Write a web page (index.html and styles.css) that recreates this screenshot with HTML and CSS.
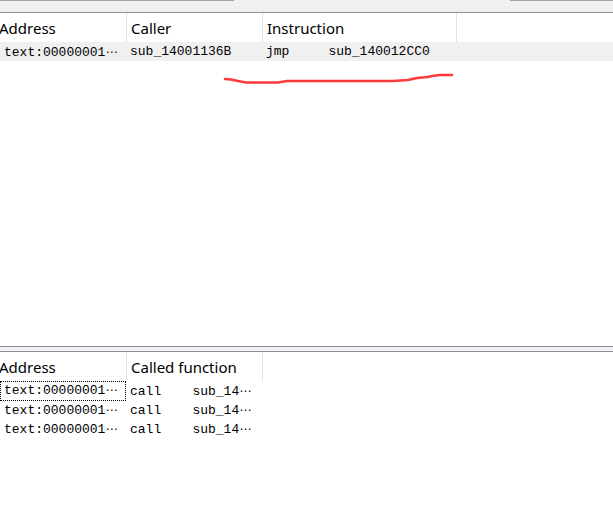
FILE: index.html
```html
<!DOCTYPE html>
<html>
<head>
<meta charset="utf-8">
<link rel="stylesheet" href="styles.css">
</head>
<body>
<div class="topbar"><span class="thumb thumb-a"></span><span class="thumb thumb-b"></span></div>
<section class="pane pane-top">
  <div class="grid cols3 head">
    <div class="hcell first">Address</div>
    <div class="hcell">Caller</div>
    <div class="hcell">Instruction</div>
  </div>
  <div class="grid cols3 row selected">
    <div class="cell first">text:00000001<span class="ell">⋯</span></div>
    <div class="cell">sub_14001136B</div>
    <div class="cell">jmp     sub_140012CC0</div>
  </div>
  <svg class="mark" width="240" height="16" viewBox="0 0 240 16">
    <path d="M4 7 L10 7.5 L17 9 L25 10.5 L57 10.5 L66 9 L172 9 L187 8 L196 6 L207 5 L211 4 L219 3 L231 3" fill="none" stroke="#ff3a3a" stroke-width="2.6" stroke-linecap="round" stroke-linejoin="round"/>
  </svg>
</section>
<div class="splitter"></div>
<section class="pane pane-bottom">
  <div class="grid cols2 head">
    <div class="hcell first">Address</div>
    <div class="hcell">Called function</div>
  </div>
  <div class="grid cols2 row">
    <div class="cell first focus">text:00000001<span class="ell">⋯</span></div>
    <div class="cell">call    sub_14<span class="ell">⋯</span></div>
  </div>
  <div class="grid cols2 row">
    <div class="cell first">text:00000001<span class="ell">⋯</span></div>
    <div class="cell">call    sub_14<span class="ell">⋯</span></div>
  </div>
  <div class="grid cols2 row">
    <div class="cell first">text:00000001<span class="ell">⋯</span></div>
    <div class="cell">call    sub_14<span class="ell">⋯</span></div>
  </div>
</section>
</body>
</html>
```
FILE: styles.css
```css
html, body {
  margin: 0;
  padding: 0;
  background: #ffffff;
  width: 613px;
  height: 518px;
  overflow: hidden;
}

.topbar {
  height: 12px;
  background: #f0f0f0;
  border-bottom: 1px solid #8b8e96;
  display: flex;
  align-items: flex-start;
}

.thumb {
  display: block;
  height: 1px;
  background: #a3a3a3;
}

.thumb-a { width: 234px; }
.thumb-b { width: 103px; margin-left: auto; }

.pane {
  position: relative;
  background: #ffffff;
}

.pane-top { height: 333px; }

.splitter {
  height: 4px;
  background: #f0f0f0;
  border-top: 1px solid #8b8e96;
  border-bottom: 1px solid #8b8e96;
}

.grid { display: grid; }
.cols3 { grid-template-columns: 127px 136px 194px; }
.cols2 { grid-template-columns: 127px 136px; }

.head { height: 29px; }

.hcell {
  font-family: "Noto Sans", "Open Sans", sans-serif;
  font-size: 15px;
  line-height: 28px;
  padding-top: 1px;
  color: #000;
  padding-left: 4px;
  border-right: 1px solid #e3e3e3;
  white-space: nowrap;
  overflow: hidden;
}

.hcell.first { padding-left: 0; text-indent: -1px; }

.row { height: 19px; }
.row.selected { background: #f0f0f0; }

.cell {
  font-family: "Liberation Mono", "DejaVu Sans Mono", monospace;
  font-size: 13px;
  line-height: 18px;
  padding-top: 1px;
  color: #000;
  padding-left: 3px;
  white-space: pre;
  box-sizing: border-box;
}

.cell.first { padding-left: 4px; }

.ell {
  font-family: "DejaVu Sans", sans-serif;
  font-size: 12px;
}

.cell.focus {
  border: 1px dotted #000;
  width: 126px;
  padding-left: 3px;
  padding-top: 0;
  line-height: 17px;
}

.mark {
  position: absolute;
  left: 221px;
  top: 59px;
}
```
